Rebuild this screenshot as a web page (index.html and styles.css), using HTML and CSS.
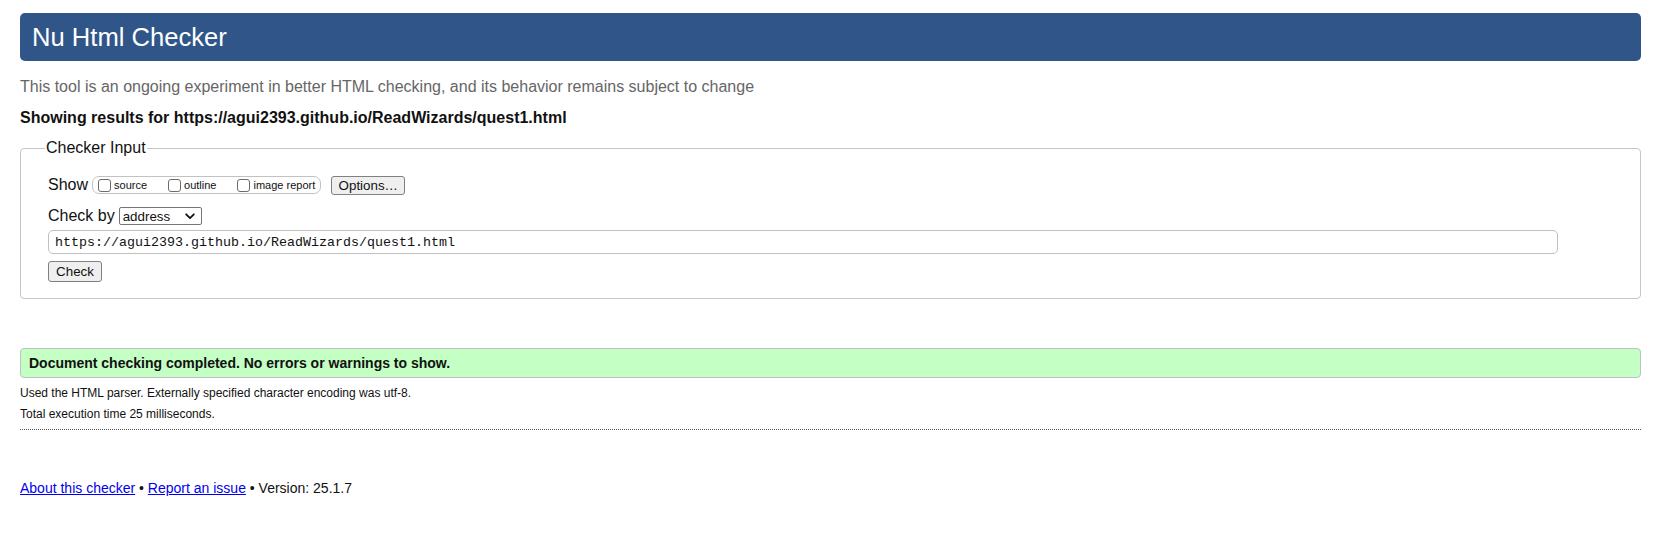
FILE: index.html
```
<!DOCTYPE html>
<html lang="en">
<head>
<meta charset="utf-8">
<title>Showing results for https://agui2393.github.io/ReadWizards/quest1.html - Nu Html Checker</title>
<link rel="stylesheet" href="styles.css">
</head>
<body>
<h1 class="title">Nu Html Checker</h1>
<p class="tagline">This tool is an ongoing experiment in better HTML checking, and its behavior remains subject to change</p>
<p class="showing">Showing results for https://agui2393.github.io/ReadWizards/quest1.html</p>
<form class="checker">
  <fieldset class="input-set">
    <legend class="input-legend">Checker Input</legend>
    <div class="row row-show">
      <span class="row-label">Show</span>
      <span class="show-group">
        <label class="cb-item"><input type="checkbox" class="cb"><span>source</span></label>
        <label class="cb-item"><input type="checkbox" class="cb"><span>outline</span></label>
        <label class="cb-item cb-last"><input type="checkbox" class="cb"><span>image report</span></label>
      </span>
      <button type="button" class="btn btn-options">Options…</button>
    </div>
    <div class="row row-by">
      <span class="row-label">Check by</span>
      <span class="select-wrap">
        <select class="select"><option>address</option></select>
        <svg class="chev" width="10" height="7" viewBox="0 0 10 7"><path d="M1.2 1.3 L5 5.1 L8.8 1.3" fill="none" stroke="#111" stroke-width="1.8" stroke-linecap="round" stroke-linejoin="round"/></svg>
      </span>
    </div>
    <div class="row row-url">
      <input class="url" type="text" value="https://agui2393.github.io/ReadWizards/quest1.html">
    </div>
    <div class="row row-submit">
      <button type="button" class="btn btn-check">Check</button>
    </div>
  </fieldset>
</form>
<p class="success">Document checking completed. No errors or warnings to show.</p>
<div class="details">
  <p class="detail">Used the HTML parser. Externally specified character encoding was utf-8.</p>
  <p class="detail">Total execution time 25 milliseconds.</p>
</div>
<p class="footer"><a href="#">About this checker</a> • <a href="#">Report an issue</a> • Version: 25.1.7</p>
</body>
</html>
```
FILE: styles.css
```
html, body {
  background: #ffffff;
}
body {
  margin: 0;
  padding: 13px 34px 0 20px;
  font-family: "Liberation Sans", Arial, Helvetica, sans-serif;
  color: #111;
}
.title {
  margin: 0;
  height: 48px;
  line-height: 48px;
  padding: 0 12px;
  background: #305689;
  color: #ffffff;
  font-size: 25.6px;
  font-weight: normal;
  border-radius: 5px;
}
.tagline {
  margin: 15px 0 0;
  font-size: 16px;
  line-height: 21px;
  color: #666666;
}
.showing {
  margin: 11px 0 0;
  font-size: 16px;
  line-height: 20px;
  font-weight: bold;
  color: #111;
}
.checker {
  margin: 10px 0 0;
}
.input-set {
  margin: 0;
  padding: 0 27px 16px;
  border: 1px solid #c6c6c6;
  border-radius: 4px;
}
.input-legend {
  font-size: 16px;
  line-height: 20px;
  padding: 0 1px;
  margin-left: -3px;
  color: #111;
}
.row {
  display: flex;
  align-items: center;
}
.row-label {
  font-size: 16px;
  line-height: 18px;
}
.row-show {
  margin-top: 18px;
  height: 18px;
}
.show-group {
  display: flex;
  align-items: center;
  margin-left: 4px;
  height: 18px;
  box-sizing: border-box;
  padding: 0 5px 0 5px;
  border: 1px solid #c2c2c2;
  border-radius: 7px;
}
.cb-item {
  display: flex;
  align-items: center;
  font-size: 11px;
  margin-right: 21px;
}
.cb-last {
  margin-right: 0;
}
.cb {
  appearance: none;
  -webkit-appearance: none;
  margin: 0 3px 0 0;
  width: 13px;
  height: 13px;
  border: 1px solid #6b6b6b;
  border-radius: 3px;
  background: #ffffff;
  box-sizing: border-box;
}
.btn {
  appearance: none;
  -webkit-appearance: none;
  font-family: "Liberation Sans", Arial, Helvetica, sans-serif;
  font-size: 13.33px;
  color: #111;
  background: #efefef;
  border: 1px solid #808080;
  border-radius: 3px;
  box-sizing: border-box;
  margin: 0;
}
.btn-options {
  margin-left: 10px;
  height: 19px;
  width: 74px;
  padding: 0;
}
.row-by {
  margin-top: 13px;
  height: 18px;
}
.select-wrap {
  position: relative;
  display: inline-block;
  margin-left: 4px;
}
.select {
  appearance: none;
  -webkit-appearance: none;
  display: block;
  width: 83px;
  height: 18px;
  box-sizing: border-box;
  padding: 0 0 0 3px;
  margin: 0;
  font-family: "Liberation Sans", Arial, Helvetica, sans-serif;
  font-size: 13.33px;
  color: #111;
  background: #ffffff;
  border: 1px solid #767676;
  border-radius: 2px;
}
.chev {
  position: absolute;
  right: 7px;
  top: 6px;
}
.row-url {
  margin-top: 5px;
}
.url {
  width: 1510px;
  height: 24px;
  box-sizing: border-box;
  margin: 0;
  padding: 0 6px;
  font-family: "Liberation Mono", "DejaVu Sans Mono", monospace;
  font-size: 13.33px;
  color: #111;
  border: 1px solid #c0c0c0;
  border-radius: 5px;
  background: #ffffff;
}
.row-submit {
  margin-top: 7px;
}
.btn-check {
  width: 54px;
  height: 21px;
  padding: 0;
}
.success {
  margin: 49px 0 0;
  height: 30px;
  box-sizing: border-box;
  line-height: 28px;
  padding: 0 8px;
  font-size: 14px;
  font-weight: bold;
  background: #c4ffc4;
  border: 1px solid #c0c0c0;
  border-radius: 4px;
  color: #111;
}
.details {
  margin-top: 5px;
  padding-bottom: 5px;
  border-bottom: 1px dotted #555555;
}
.detail {
  margin: 0;
  font-size: 12px;
  line-height: 20.5px;
  color: #111;
}
.footer {
  margin: 48px 0 0;
  font-size: 14px;
  line-height: 20px;
  color: #111;
}
.footer a {
  color: #0000ee;
}
```
